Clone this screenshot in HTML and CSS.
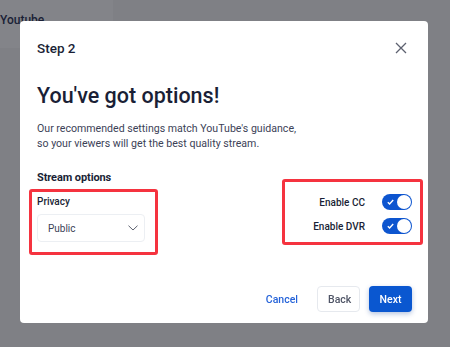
FILE: index.html
```html
<!DOCTYPE html>
<html lang="en">
<head>
    <meta charset="UTF-8">
    <meta name="viewport" content="width=device-width, initial-scale=1.0">
    <title>Stream setup</title>
    <link rel="stylesheet" href="styles.css">
</head>
<body>
    <div class="page">
        <div class="side-top">Youtube</div>
    </div>

    <div class="overlay">
        <div class="modal">
            <header class="modal-header">
                <span class="step">Step 2</span>
                <button class="close-btn" aria-label="Close">
                    <svg width="12" height="12" viewBox="0 0 12 12">
                        <path d="M1 1L11 11M11 1L1 11" stroke="#5d6170" stroke-width="1.3" fill="none"/>
                    </svg>
                </button>
            </header>

            <h1>You've got options!</h1>
            <p class="intro">Our recommended settings match YouTube's guidance,<br>so your viewers will get the best quality stream.</p>

            <div class="options">
                <div class="options-left">
                    <h2>Stream options</h2>
                    <div class="mark mark-privacy">
                        <label class="field-label">Privacy</label>
                        <div class="select">
                            <span>Public</span>
                            <svg width="10" height="6" viewBox="0 0 10 6">
                                <path d="M0.5 0.7L5 5L9.5 0.7" stroke="#5d6170" stroke-width="1" fill="none"/>
                            </svg>
                        </div>
                    </div>
                </div>

                <div class="mark mark-toggles">
                    <div class="toggle-row">
                        <span>Enable CC</span>
                        <span class="toggle">
                            <svg width="7" height="6" viewBox="0 0 7 6"><path d="M0.8 3.2L2.6 4.9L6.2 1" stroke="#fff" stroke-width="1.4" fill="none"/></svg>
                            <span class="knob"></span>
                        </span>
                    </div>
                    <div class="toggle-row">
                        <span>Enable DVR</span>
                        <span class="toggle">
                            <svg width="7" height="6" viewBox="0 0 7 6"><path d="M0.8 3.2L2.6 4.9L6.2 1" stroke="#fff" stroke-width="1.4" fill="none"/></svg>
                            <span class="knob"></span>
                        </span>
                    </div>
                </div>
            </div>

            <footer class="modal-footer">
                <button class="btn btn-link">Cancel</button>
                <button class="btn btn-default">Back</button>
                <button class="btn btn-primary">Next</button>
            </footer>
        </div>
    </div>
</body>
</html>
```

FILE: styles.css
```css
* {
    box-sizing: border-box;
    margin: 0;
    padding: 0;
}

body {
    font-family: Roboto, 'Noto Sans', sans-serif;
    background-color: #7f8085;
    height: 100vh;
    overflow: hidden;
    color: #1a1f36;
}

.page {
    height: 100%;
}

.side-top {
    width: 113px;
    height: 48px;
    background-color: #838489;
    padding-top: 13px;
    font-size: 12px;
    font-weight: 500;
    color: #1a1f36;
}

.overlay {
    position: fixed;
    inset: 0;
    padding: 21px 22px 0 20px;
}

.modal {
    background: #fff;
    border-radius: 4px;
    height: 302px;
    padding: 17px 16px 0 17px;
    display: flex;
    flex-direction: column;
}

.modal-header {
    display: flex;
    justify-content: space-between;
    align-items: center;
    height: 20px;
}

.step {
    font-size: 13.5px;
    font-weight: 500;
    line-height: 20px;
}

.close-btn {
    background: none;
    border: none;
    width: 12px;
    height: 12px;
    margin-right: 5px;
    display: flex;
    cursor: pointer;
}

h1 {
    font-size: 21.5px;
    font-weight: 500;
    margin-top: 25px;
    line-height: 26px;
}

.intro {
    font-size: 10.6px;
    line-height: 15px;
    color: #3c4257;
    margin-top: 12px;
}

.options {
    display: flex;
    justify-content: space-between;
    margin-top: 19px;
}

h2 {
    font-size: 11px;
    font-weight: 700;
    line-height: 16px;
    letter-spacing: -0.1px;
}

.mark {
    border: 3px solid #f5333f;
    border-radius: 3px;
}

.mark-privacy {
    margin: 3px 0 0 -8px;
    width: 129px;
    padding: 3px 10px 10px 5px;
}

.field-label {
    display: block;
    font-size: 10px;
    font-weight: 500;
    line-height: 14px;
}

.select {
    margin-top: 5px;
    height: 28px;
    border: 1px solid #eceff3;
    border-radius: 4px;
    display: flex;
    align-items: center;
    justify-content: space-between;
    padding: 0 6px 0 10px;
    font-size: 10px;
    color: #3c4257;
}

.mark-toggles {
    margin: 9px -11px 0 0;
    width: 141px;
    height: 66px;
    padding: 12px 8px 0 0;
    display: flex;
    flex-direction: column;
    align-items: flex-end;
    gap: 8px;
}

.toggle-row {
    display: flex;
    align-items: center;
    gap: 17px;
    font-size: 10px;
    font-weight: 500;
}

.toggle {
    width: 30px;
    height: 16px;
    border-radius: 8px;
    background-color: #0d55cf;
    display: flex;
    align-items: center;
    justify-content: space-between;
    padding: 0 1px 0 5px;
}

.knob {
    width: 14px;
    height: 14px;
    border-radius: 50%;
    background-color: #fff;
}

.modal-footer {
    margin-top: auto;
    margin-bottom: 11px;
    display: flex;
    justify-content: flex-end;
    align-items: center;
    gap: 9px;
}

.btn {
    font-family: inherit;
    font-size: 10.5px;
    font-weight: 500;
    height: 26px;
    border-radius: 4px;
    padding: 0 10px;
    cursor: pointer;
}

.btn-link {
    background: none;
    border: none;
    color: #2563d9;
}

.btn-default {
    background: #fff;
    border: 1px solid #e6e9ee;
    color: #4f5566;
    width: 43px;
}

.btn-primary {
    background: #0a57d0;
    border: none;
    color: #fff;
    width: 43px;
    box-shadow: 0 2px 5px rgba(10, 60, 150, 0.3);
}
```
